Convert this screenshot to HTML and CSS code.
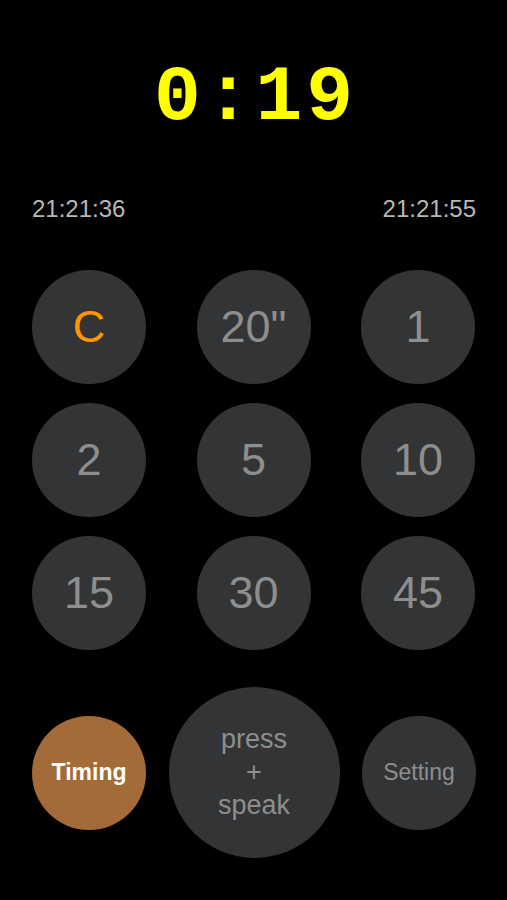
FILE: index.html
```html
<!DOCTYPE html>
<html lang="en">
<head>
    <meta charset="UTF-8">
    <meta name="viewport" content="width=device-width, initial-scale=1.0">
    <title>Timer</title>
    <link rel="stylesheet" href="styles.css">
</head>
<body>
    <div class="screen">
        <div class="timer">0:19</div>

        <div class="clocks">
            <span>21:21:36</span>
            <span>21:21:55</span>
        </div>

        <div class="keypad">
            <button class="key clear">C</button>
            <button class="key">20"</button>
            <button class="key">1</button>
            <button class="key">2</button>
            <button class="key">5</button>
            <button class="key">10</button>
            <button class="key">15</button>
            <button class="key">30</button>
            <button class="key">45</button>
        </div>

        <div class="actions">
            <button class="key small timing">Timing</button>
            <button class="key big">press<br>+<br>speak</button>
            <button class="key small">Setting</button>
        </div>
    </div>
</body>
</html>
```

FILE: styles.css
```css
body {
    margin: 0;
    background-color: #000;
    font-family: "Liberation Sans", Arial, sans-serif;
}

.screen {
    width: 507px;
    height: 900px;
    display: flex;
    flex-direction: column;
}

.timer {
    margin-top: 58px;
    padding-left: 4px;
    font-family: "Liberation Mono", "Courier New", monospace;
    font-weight: bold;
    font-size: 78px;
    line-height: 80px;
    letter-spacing: 4px;
    color: #ffff00;
    text-align: center;
}

.clocks {
    margin-top: 58px;
    padding: 0 31px 0 32px;
    display: flex;
    justify-content: space-between;
    font-size: 24px;
    line-height: 26px;
    color: #b8b8b8;
}

.keypad {
    margin-top: 48px;
    padding: 0 32px;
    display: grid;
    grid-template-columns: repeat(3, 114px);
    justify-content: space-between;
    row-gap: 19px;
}

.key {
    width: 114px;
    height: 114px;
    padding: 0;
    border: none;
    border-radius: 50%;
    background-color: #333435;
    color: #8e8e8e;
    font-family: "Liberation Sans", Arial, sans-serif;
    font-size: 45px;
    cursor: pointer;
}

.clear {
    color: #ff9500;
}

.actions {
    margin-top: 37px;
    padding: 0 31px 0 32px;
    display: flex;
    justify-content: space-between;
    align-items: center;
}

.key.small {
    font-size: 23px;
}

.timing {
    background-color: #a36b37;
    color: #fff;
    font-weight: bold;
    font-size: 22px;
}

.key.big {
    width: 171px;
    height: 171px;
    font-size: 27px;
    line-height: 33px;
}
```
